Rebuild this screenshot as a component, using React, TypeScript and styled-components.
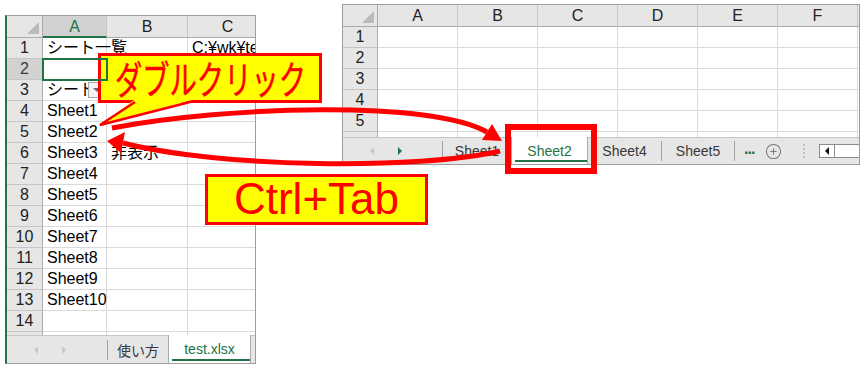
import { createGlobalStyle, styled, css } from "styled-components";
import { CirclePlus } from "lucide-react";

const GREEN = "#217346";
const RED = "#ff0000";
const YELLOW = "#ffff00";

const GlobalStyle = createGlobalStyle`
  * { box-sizing: border-box; }
  html, body { margin: 0; padding: 0; background: #ffffff; }
  body {
    font-family: "Liberation Sans", "Noto Sans CJK JP", sans-serif;
    color: #000;
  }
`;

const Desktop = styled.div`
  position: relative;
  width: 867px;
  height: 372px;
  overflow: hidden;
  background: #fff;
`;

const Window = styled.div<{ $x: number; $y: number; $w: number; $h: number; $frame?: boolean }>`
  position: absolute;
  left: ${(p) => p.$x}px;
  top: ${(p) => p.$y}px;
  width: ${(p) => p.$w}px;
  height: ${(p) => p.$h}px;
  border: 1px solid #9e9e9e;
  border-left: ${(p) => (p.$frame ? `2px solid ${GREEN}` : "1px solid #9e9e9e")};
  background: #fff;
  display: flex;
  flex-direction: column;
  overflow: hidden;
`;

const Sheet = styled.div<{ $cols: string; $h: number }>`
  display: grid;
  grid-template-columns: ${(p) => p.$cols};
  grid-template-rows: 22px;
  grid-auto-rows: 21px;
  height: ${(p) => p.$h}px;
  flex: none;
  overflow: hidden;
  font-size: 16px;
`;

const Corner = styled.div`
  position: relative;
  background: #e6e6e6;
  border-right: 1px solid #ababab;
  border-bottom: 1px solid #ababab;
  &::after {
    content: "";
    position: absolute;
    right: 3px;
    bottom: 3px;
    border-style: solid;
    border-width: 0 0 12px 12px;
    border-color: transparent transparent #bababa transparent;
  }
`;

const ColHead = styled.div<{ $sel?: boolean }>`
  display: flex;
  align-items: center;
  justify-content: center;
  background: ${(p) => (p.$sel ? "#d2d2d2" : "#e6e6e6")};
  color: ${(p) => (p.$sel ? GREEN : "#222")};
  border-right: 1px solid #c6c6c6;
  border-bottom: ${(p) => (p.$sel ? `2px solid ${GREEN}` : "1px solid #ababab")};
  padding-top: 1px;
`;

const RowHead = styled.div<{ $sel?: boolean }>`
  display: flex;
  align-items: center;
  justify-content: center;
  background: ${(p) => (p.$sel ? "#d2d2d2" : "#e6e6e6")};
  color: ${(p) => (p.$sel ? "#3b3b3b" : "#222")};
  border-right: 1px solid #ababab;
  border-bottom: 1px solid #c6c6c6;
`;

const Cell = styled.div<{ $sel?: boolean }>`
  position: relative;
  display: flex;
  align-items: flex-end;
  min-width: 0;
  padding: 0 0 1px 4px;
  line-height: 19px;
  white-space: nowrap;
  border-right: 1px solid #dadada;
  border-bottom: 1px solid #dadada;
  ${(p) =>
    p.$sel &&
    css`
      outline: 2px solid ${GREEN};
      outline-offset: -1px;
      z-index: 1;
    `}
`;

const FilterButton = styled.span`
  position: absolute;
  right: 1px;
  bottom: 2px;
  width: 17px;
  height: 16px;
  background: #f3f3f3;
  border: 1px solid #a8a8a8;
  &::after {
    content: "";
    position: absolute;
    left: 4px;
    top: 5px;
    border-left: 4px solid transparent;
    border-right: 4px solid transparent;
    border-top: 4px solid #6a6a6a;
  }
`;

const TabBar = styled.div`
  flex: 1;
  display: flex;
  align-items: stretch;
  background: #e6e6e6;
  border-top: 1px solid #c6c6c6;
  font-size: 14px;
`;

const NavArea = styled.div<{ $w: number }>`
  flex: none;
  width: ${(p) => p.$w}px;
  display: flex;
  align-items: center;
  padding-left: 27px;
  gap: 24px;
`;

const NavArrow = styled.span<{ $dir: "left" | "right"; $color: string }>`
  width: 0;
  height: 0;
  border-top: 4px solid transparent;
  border-bottom: 4px solid transparent;
  ${(p) =>
    p.$dir === "left"
      ? `border-right: 4px solid ${p.$color};`
      : `border-left: 4px solid ${p.$color};`}
`;

const Sep = styled.span`
  flex: none;
  align-self: center;
  width: 1px;
  height: 20px;
  background: #a3a3a3;
`;

const Tab = styled.div<{ $w: number; $active?: boolean }>`
  position: relative;
  flex: none;
  width: ${(p) => p.$w}px;
  display: flex;
  align-items: center;
  justify-content: center;
  color: ${(p) => (p.$active ? GREEN : "#383838")};
  ${(p) =>
    p.$active &&
    css`
      background: #fff;
      margin-top: -1px;
      border-left: 1px solid #ababab;
      border-right: 1px solid #ababab;
      &::after {
        content: "";
        position: absolute;
        left: 3px;
        right: 0;
        bottom: 2px;
        height: 2px;
        background: ${GREEN};
      }
    `}
`;

const More = styled.span`
  margin-left: 9px;
  align-self: center;
  color: ${GREEN};
  font-weight: bold;
  font-size: 16px;
  line-height: 1;
  margin-top: -4px;
  letter-spacing: -1px;
`;

const AddSheet = styled.span`
  margin-left: 11px;
  align-self: center;
  display: flex;
  color: #7a7a7a;
`;

const Grip = styled.span`
  margin-left: 21px;
  align-self: center;
  width: 2px;
  height: 14px;
  border-left: 2px dotted #c2c2c2;
`;

const ScrollBar = styled.div`
  margin-left: 14px;
  align-self: center;
  flex: none;
  width: 60px;
  height: 14px;
  background: #fff;
  border: 1px solid #8c8c8c;
  display: flex;
`;

const ScrollButton = styled.span`
  width: 15px;
  border-right: 1px solid #8c8c8c;
  display: flex;
  align-items: center;
  justify-content: center;
  &::after {
    content: "";
    border-top: 4px solid transparent;
    border-bottom: 4px solid transparent;
    border-right: 4px solid #111;
  }
`;

const Overlay = styled.svg`
  position: absolute;
  left: 0;
  top: 0;
  width: 867px;
  height: 372px;
  pointer-events: none;
`;

const CalloutBox = styled.div<{ $x: number; $y: number; $w: number; $h: number }>`
  position: absolute;
  left: ${(p) => p.$x}px;
  top: ${(p) => p.$y}px;
  width: ${(p) => p.$w}px;
  height: ${(p) => p.$h}px;
  background: ${YELLOW};
  border: 3px solid ${RED};
  display: flex;
  align-items: center;
  justify-content: center;
  color: ${RED};
  white-space: nowrap;
`;

const KanaLabel = styled.span`
  font-family: "Noto Sans CJK JP", sans-serif;
  font-size: 39px;
  line-height: 1;
  transform: scaleX(0.7);
  -webkit-text-stroke: 0.5px ${RED};
  margin-top: -2px;
`;

const KeyLabel = styled.span`
  font-family: "Liberation Sans", sans-serif;
  font-size: 44px;
  line-height: 1;
  margin-top: -1px;
`;

const Highlight = styled.div`
  position: absolute;
  left: 505px;
  top: 124px;
  width: 92px;
  height: 50px;
  border: 6px solid ${RED};
`;

const leftCols = ["A", "B", "C"];
const leftRows: { [k: number]: string[] } = {
  1: ["シート一覧", "", "C:¥wk¥test.xlsx"],
  3: ["シート名", "", ""],
  4: ["Sheet1", "", ""],
  5: ["Sheet2", "", ""],
  6: ["Sheet3", "非表示", ""],
  7: ["Sheet4", "", ""],
  8: ["Sheet5", "", ""],
  9: ["Sheet6", "", ""],
  10: ["Sheet7", "", ""],
  11: ["Sheet8", "", ""],
  12: ["Sheet9", "", ""],
  13: ["Sheet10", "", ""],
};

const rightCols = ["A", "B", "C", "D", "E", "F"];

interface RowProps {
  label?: number;
  values: string[];
  selected?: number;
  filterAt?: number;
}

function Row({ label, values, selected, filterAt }: RowProps) {
  return (
    <>
      <RowHead $sel={selected !== undefined}>{label}</RowHead>
      {values.map((v, i) => (
        <Cell key={i} $sel={selected === i}>
          {v}
          {filterAt === i && <FilterButton />}
        </Cell>
      ))}
    </>
  );
}

function LeftBook() {
  const rows = Array.from({ length: 15 }, (_, i) => i + 1);
  return (
    <Window $x={5} $y={15} $w={251} $h={349} $frame>
      <Sheet $cols="36px 64px 81px 80px" $h={319}>
        <Corner />
        {leftCols.map((c) => (
          <ColHead key={c} $sel={c === "A"}>
            {c}
          </ColHead>
        ))}
        {rows.map((r) => (
          <Row
            key={r}
            label={r === 15 ? undefined : r}
            values={leftRows[r] ?? ["", "", ""]}
            selected={r === 2 ? 0 : undefined}
            filterAt={r === 3 ? 0 : undefined}
          />
        ))}
      </Sheet>
      <TabBar>
        <NavArea $w={100}>
          <NavArrow $dir="left" $color="#c8c8c8" />
          <NavArrow $dir="right" $color="#c8c8c8" />
        </NavArea>
        <Sep />
        <Tab $w={60}>使い方</Tab>
        <Tab $w={83} $active>
          test.xlsx
        </Tab>
      </TabBar>
    </Window>
  );
}

function RightBook() {
  const rows = [1, 2, 3, 4, 5, 6];
  return (
    <Window $x={342} $y={4} $w={518} $h={161}>
      <Sheet $cols="35px repeat(6, 80px) 1fr" $h={132}>
        <Corner />
        {rightCols.map((c) => (
          <ColHead key={c}>{c}</ColHead>
        ))}
        <ColHead />
        {rows.map((r) => (
          <Row key={r} label={r === 6 ? undefined : r} values={["", "", "", "", "", "", ""]} />
        ))}
      </Sheet>
      <TabBar>
        <NavArea $w={99}>
          <NavArrow $dir="left" $color="#c8c8c8" />
          <NavArrow $dir="right" $color={GREEN} />
        </NavArea>
        <Sep />
        <Tab $w={68}>Sheet1</Tab>
        <Tab $w={77} $active>
          Sheet2
        </Tab>
        <Tab $w={73}>Sheet4</Tab>
        <Sep />
        <Tab $w={72}>Sheet5</Tab>
        <Sep />
        <More>...</More>
        <AddSheet>
          <CirclePlus size={17} strokeWidth={1.5} />
        </AddSheet>
        <Grip />
        <ScrollBar>
          <ScrollButton />
        </ScrollBar>
      </TabBar>
    </Window>
  );
}

function Arrows() {
  return (
    <Overlay viewBox="0 0 867 372">
      <path
        d="M112,128 C230,106 430,100 487,132"
        fill="none"
        stroke={RED}
        strokeWidth={5}
      />
      <polygon points="502,141 482,140 492,124" fill={RED} />
      <path
        d="M500,151 C420,170 220,168 123,143"
        fill="none"
        stroke={RED}
        strokeWidth={5}
      />
      <polygon points="107,141 125,132 121,153" fill={RED} />
    </Overlay>
  );
}

function CalloutTail() {
  return (
    <Overlay viewBox="0 0 867 372">
      <polygon points="134,100 192,100 100,125" fill={YELLOW} />
      <polyline
        points="135,102 100,125 190,102"
        fill="none"
        stroke={RED}
        strokeWidth={2.5}
      />
    </Overlay>
  );
}

export default function App() {
  return (
    <>
      <GlobalStyle />
      <Desktop>
        <LeftBook />
        <RightBook />
        <Arrows />
        <CalloutBox $x={98} $y={53} $w={224} $h={50}>
          <KanaLabel>ダブルクリック</KanaLabel>
        </CalloutBox>
        <CalloutTail />
        <CalloutBox $x={205} $y={174} $w={223} $h={51}>
          <KeyLabel>Ctrl+Tab</KeyLabel>
        </CalloutBox>
        <Highlight />
      </Desktop>
    </>
  );
}
